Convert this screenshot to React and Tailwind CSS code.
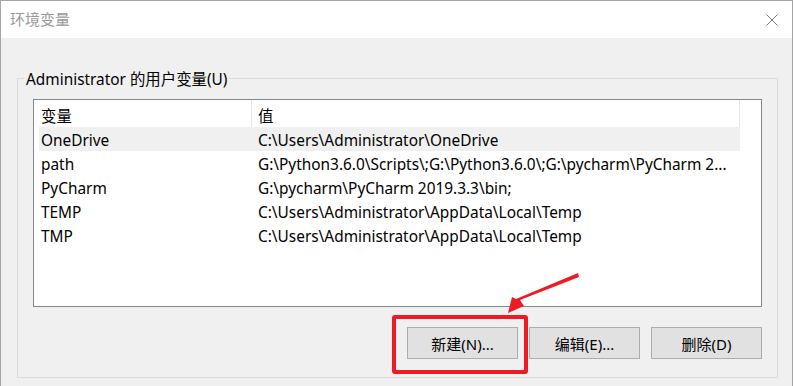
const rows = [
  { name: 'OneDrive', value: 'C:\\Users\\Administrator\\OneDrive', selected: true },
  { name: 'path', value: 'G:\\Python3.6.0\\Scripts\\;G:\\Python3.6.0\\;G:\\pycharm\\PyCharm 2...' },
  { name: 'PyCharm', value: 'G:\\pycharm\\PyCharm 2019.3.3\\bin;' },
  { name: 'TEMP', value: 'C:\\Users\\Administrator\\AppData\\Local\\Temp' },
  { name: 'TMP', value: 'C:\\Users\\Administrator\\AppData\\Local\\Temp' },
];

const font = { fontFamily: '"Noto Sans", "Noto Sans CJK SC", sans-serif' };

function WinButton({ children }) {
  return (
    <button className="w-[111px] h-[32px] pt-[2px] bg-[#e1e1e1] border border-[#adadad] text-[15px] text-black leading-none">
      {children}
    </button>
  );
}

export default function App() {
  return (
    <div className="relative w-[794px] h-[386px] bg-white overflow-hidden" style={font}>
      <div className="w-[793px] h-[386px] border-l border-t border-r border-[#a6a6a6] flex flex-col">
        {/* Title bar */}
        <div className="h-[37px] bg-white flex items-center justify-between pl-[9px] pr-[14px] shrink-0">
          <span className="text-[15px] text-[#999999]">环境变量</span>
          <svg width="12" height="12" viewBox="0 0 12 12" className="text-[#777]">
            <path d="M0.5 0.5 L11.5 11.5 M11.5 0.5 L0.5 11.5" stroke="currentColor" strokeWidth="1" />
          </svg>
        </div>

        {/* Body */}
        <div className="flex-1 bg-[#f0f0f0] pl-[16px] pr-[14px] pt-[30px]">
          <fieldset className="border border-[#dcdcdc] h-[310px] px-[15px] pb-[18px] flex flex-col">
            <legend className="-ml-[9px] px-[2px] text-[15.4px] leading-[20px] text-black">
              <span className="relative top-[2px]">Administrator 的用户变量(U)</span>
            </legend>

            {/* List */}
            <div className="mt-[11px] h-[208px] bg-white border border-[#828790] pl-[5px] pr-[21px] text-[15.4px] text-black">
              <div className="flex h-[27px]">
                <div className="w-[213px] h-full flex items-center pt-[6px] pl-[2px] border-r border-[#e5e5e5]">变量</div>
                <div className="flex-1 h-full flex items-center pt-[6px] pl-[6px] border-r border-[#e5e5e5]">值</div>
              </div>
              {rows.map((r) => (
                <div
                  key={r.name}
                  className={`flex h-[24px] items-center pt-[4px] ${r.selected ? 'bg-[#f0f0f0]' : ''}`}
                >
                  <div className="w-[213px] pl-[2px] whitespace-nowrap">{r.name}</div>
                  <div className="flex-1 pl-[6px] whitespace-nowrap">{r.value}</div>
                </div>
              ))}
            </div>

            {/* Buttons */}
            <div className="mt-auto flex justify-end gap-[11px]">
              <WinButton>新建(N)...</WinButton>
              <WinButton>编辑(E)...</WinButton>
              <WinButton>删除(D)</WinButton>
            </div>
          </fieldset>
        </div>
      </div>

      {/* Red highlight box */}
      <div className="absolute left-[392px] top-[315px] w-[136px] h-[59px] border-4 border-[#ed1c24] rounded-[3px]" />

      {/* Red arrow */}
      <svg className="absolute left-0 top-0" width="794" height="386" viewBox="0 0 794 386">
        <polygon
          points="578,273 579,277 520,300 524,306 508,313 512,297 516,299"
          fill="#ed1c24"
        />
      </svg>
    </div>
  );
}
